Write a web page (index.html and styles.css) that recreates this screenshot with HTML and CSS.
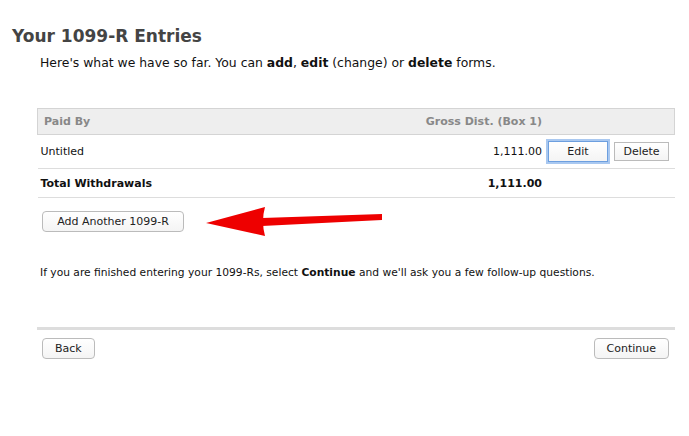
FILE: index.html
```html
<!DOCTYPE html>
<html lang="en">
<head>
  <meta charset="UTF-8" />
  <title>Your 1099-R Entries</title>
  <link rel="stylesheet" href="styles.css">
</head>
<body>
  <h1>Your 1099-R Entries</h1>
  <p class="intro">Here's what we have so far. You can <b>add</b>, <b>edit</b> (change) or <b>delete</b> forms.</p>

  <div class="content">
    <table class="entries">
      <thead>
        <tr>
          <th class="payer">Paid By</th>
          <th class="amount">Gross Dist. (Box 1)</th>
          <th class="actions"></th>
        </tr>
      </thead>
      <tbody>
        <tr>
          <td>Untitled</td>
          <td class="amount">1,111.00</td>
          <td class="actions">
            <div class="row-buttons">
              <button class="btn focused">Edit</button>
              <button class="btn">Delete</button>
            </div>
          </td>
        </tr>
        <tr class="total">
          <td>Total Withdrawals</td>
          <td class="amount">1,111.00</td>
          <td></td>
        </tr>
      </tbody>
    </table>

    <div class="add-row">
      <button class="btn add">Add Another 1099-R</button>
      <!-- red pointer arrow -->
      <svg class="arrow" width="180" height="32" viewBox="0 0 180 32">
        <path d="M0 16 L59 0 Q55 14 59 29 Z" fill="#ee0000" />
        <path d="M56 11 L176 7 L176 13 L56 19 Z" fill="#ee0000" />
      </svg>
    </div>

    <p class="note">If you are finished entering your 1099-Rs, select <b>Continue</b> and we'll ask you a few follow-up questions.</p>

    <div class="nav">
      <button class="btn">Back</button>
      <button class="btn">Continue</button>
    </div>
  </div>
</body>
</html>
```

FILE: styles.css
```css
body {
  margin: 0;
  font-family: 'DejaVu Sans', Verdana, sans-serif;
  color: #111;
  background: #fff;
}

h1 {
  margin: 25px 0 0 12px;
  font-size: 17px;
  color: #444;
  line-height: 22px;
}

.intro {
  margin: 8px 0 0 40px;
  font-size: 12.4px;
  line-height: 16px;
}

.content {
  margin: 37px 0 0 37px;
  width: 638px;
}

.entries {
  width: 100%;
  border-collapse: collapse;
  font-size: 11px;
}

.entries th {
  background: #eee;
  border: 1px solid #d4d4d4;
  border-left: none;
  border-right: none;
  color: #888;
  font-weight: bold;
  text-align: left;
  height: 25px;
  padding: 0 6px;
}

.entries th:first-child {
  border-left: 1px solid #d4d4d4;
}

.entries th:last-child {
  border-right: 1px solid #d4d4d4;
}

.entries td {
  height: 33px;
  padding: 0 3px;
  border-bottom: 1px solid #ddd;
}

.entries .amount {
  text-align: right;
  padding-right: 2px;
}

.entries .actions {
  width: 121px;
  padding: 0 5px 0 4px;
}

.row-buttons {
  display: flex;
  align-items: center;
  gap: 6px;
}

.total td {
  font-weight: bold;
  height: 28px;
}

.btn {
  box-sizing: border-box;
  font-family: inherit;
  font-size: 11px;
  color: #222;
  background: linear-gradient(#fff, #f4f4f4);
  border: 1px solid #bbb;
  border-radius: 3px;
  padding: 2px 12px;
  height: 19px;
}

.row-buttons .btn {
  border-radius: 0;
  width: 55px;
  padding: 0;
}

.row-buttons .btn.focused {
  width: 60px;
  height: 21px;
  border: 1px solid #6d9fdf;
  box-shadow: 0 0 0 2px #a9c8f0;
}

.add-row {
  display: flex;
  align-items: flex-start;
  margin-top: 13px;
  padding-left: 5px;
}

.btn.add {
  flex: none;
  height: 21px;
  width: 142px;
  padding: 0;
  border-radius: 4px;
}

.arrow {
  flex: none;
  margin-left: 22px;
  margin-top: -4px;
}

.note {
  font-size: 10.7px;
  line-height: 13px;
  margin: 27px 0 0 3px;
}

.nav {
  display: flex;
  justify-content: space-between;
  border-top: 3px solid #ddd;
  margin-top: 48px;
  padding: 8px 6px 0 5px;
}

.nav .btn {
  height: 21px;
  border-radius: 4px;
}
```
